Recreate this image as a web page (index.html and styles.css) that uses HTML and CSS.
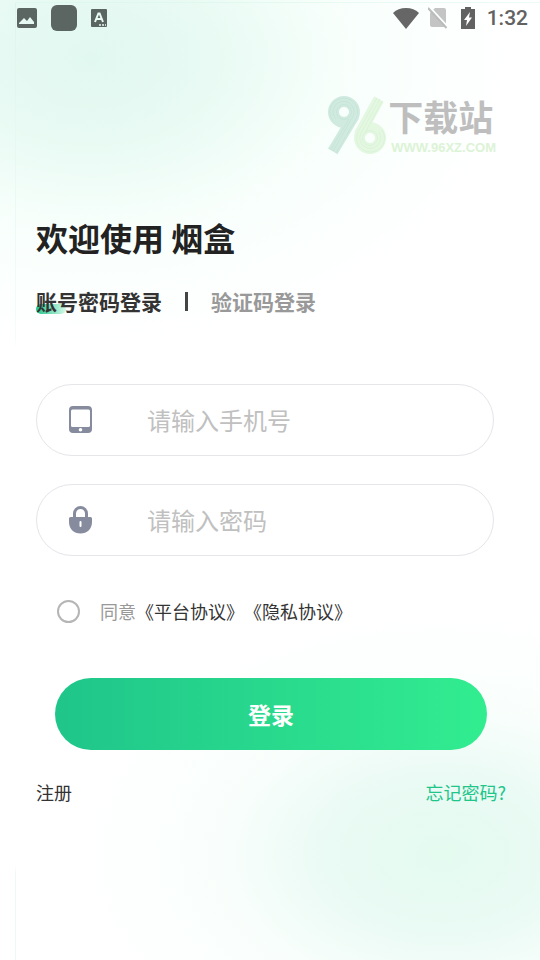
FILE: index.html
```html
<!DOCTYPE html>
<html lang="zh-CN">
<head>
<meta charset="utf-8">
<meta name="viewport" content="width=device-width, initial-scale=1">
<title>登录</title>
<link rel="stylesheet" href="styles.css">
</head>
<body>
<div class="page">
  <header class="status">
    <div class="status-group status-left">
      <svg width="20" height="20" viewBox="0 0 20 20" aria-hidden="true"><path fill="#5b6561" fill-rule="evenodd" d="M2 0h16a2 2 0 0 1 2 2v16a2 2 0 0 1-2 2H2a2 2 0 0 1-2-2V2a2 2 0 0 1 2-2zM2 16h15v-2l-4-5-3 4-3-3-5 5z"/></svg>
      <span class="app-dot"></span>
      <svg width="16" height="18" viewBox="0 0 16 18" aria-hidden="true"><rect width="16" height="18" rx="1" fill="#5b6561"/><path d="M4 13 7.400 4.500h1.200L12 13M5.300 10h5.400" fill="none" stroke="#eafbf4" stroke-width="2"/><path d="M8 16h2M11 16h2M14 16h1" stroke="#eafbf4" stroke-width="1.500"/></svg>
    </div>
    <div class="status-group status-right">
      <svg width="26" height="21" viewBox="0 0 26 21" aria-hidden="true"><path fill="#666" d="M13 21 0 5Q5 0 13 0t13 5z"/></svg>
      <svg class="sim" width="20" height="22" viewBox="0 0 20 22" aria-hidden="true"><path fill="#c4c4c4" d="M7 1h9a2 2 0 0 1 2 2v15a2 2 0 0 1-2 2H4a2 2 0 0 1-2-2V6z"/><path d="M1.500 0 20 20" stroke="#fbfffd" stroke-width="2"/><path d="M0 1 18.500 21" stroke="#bbb" stroke-width="2"/></svg>
      <svg class="battery" width="14" height="22" viewBox="0 0 14 22" aria-hidden="true"><path fill="#626262" d="M4 0h6v2h4v20H0V2h4z"/><path fill="#fff" d="M9 5 3 13h3l-1 6 6-8.500H8z"/></svg>
      <time class="clock">1:32</time>
    </div>
  </header>

  <div class="brand">
    <svg class="brand-mark" width="60" height="60" viewBox="0 0 60 60" aria-hidden="true">
      <g fill="none" stroke="#d0eae0">
        <circle cx="16" cy="17" r="10.500" stroke-width="11"/>
        <path stroke-width="11" d="M26 21 5 56"/>
      </g>
      <g fill="none" stroke="#c0e0d4" stroke-width=".6">
        <path d="M5 26A14 14 0 1 1 28 24L8 58M8 24A10.500 10.500 0 1 1 24 23L5 56M3 54 21 24M0 53l10 6"/>
        <circle cx="16" cy="17" r="7.500"/>
      </g>
      <g fill="none" stroke="#e3f7e1">
        <circle cx="42" cy="43" r="10.500" stroke-width="11"/>
        <path stroke-width="11" d="M31 40 51 4"/>
      </g>
      <g fill="none" stroke="#d5f0d2" stroke-width=".6">
        <path d="M54 35A14 14 0 1 1 30 37L49 3M51 37A10.500 10.500 0 1 1 33 38L52 4M37 38 54 6"/>
        <circle cx="42" cy="43" r="7.500"/>
      </g>
    </svg>
    <div class="brand-text">
      <span class="brand-name">下载站</span>
      <span class="brand-url">WWW.96XZ.COM</span>
    </div>
  </div>

  <main class="content">
    <h1 class="title">欢迎使用 烟盒</h1>
    <div class="tabs">
      <button type="button" class="tab tab-active"><span>账号密码登录</span></button>
      <span class="divider"></span>
      <button type="button" class="tab">验证码登录</button>
    </div>

    <form class="form">
      <label class="field">
        <svg width="24" height="28" viewBox="0 0 24 28" aria-hidden="true"><path fill="#868c9e" fill-rule="evenodd" d="M4 0h15a4 4 0 0 1 4 4v19a4 4 0 0 1-4 4H4a4 4 0 0 1-4-4V4a4 4 0 0 1 4-4zM3.500 3.500A1.500 1.500 0 0 0 2 5v14.500A1.500 1.500 0 0 0 3.500 21h16a1.500 1.500 0 0 0 1.500-1.500V5a1.500 1.500 0 0 0-1.500-1.500zM11.500 22a1.800 1.800 0 1 0 0 3.600 1.800 1.800 0 0 0 0-3.600z"/></svg>
        <input type="tel" placeholder="请输入手机号" aria-label="手机号">
      </label>
      <label class="field">
        <svg width="24" height="28" viewBox="0 0 24 28" aria-hidden="true"><path d="M5.500 13V7.500a6 6 0 0 1 12 0V13" fill="none" stroke="#868c9e" stroke-width="3"/><path fill="#868c9e" d="M1.500 11h20a1.500 1.500 0 0 1 1.500 1.500V16c0 7-5 11.500-11.500 11.500S0 23 0 16v-3.500A1.500 1.500 0 0 1 1.500 11z"/><path d="M11.500 16v4" stroke="#fff" stroke-width="2" stroke-linecap="round"/></svg>
        <input type="password" placeholder="请输入密码" aria-label="密码">
      </label>
      <div class="agree">
        <input type="checkbox" id="agree">
        <div class="agree-text"><label for="agree">同意</label><a href="#terms">《平台协议》</a><a href="#privacy">《隐私协议》</a></div>
      </div>
      <button type="submit" class="submit">登录</button>
    </form>

    <nav class="links">
      <a href="#register">注册</a>
      <a href="#forgot" class="forgot">忘记密码?</a>
    </nav>
  </main>
</div>
</body>
</html>
```
FILE: styles.css
```css
* {
  box-sizing: border-box;
}

body {
  margin: 0;
  font-family: "Noto Sans CJK SC", sans-serif;
  color: #333;
}

button,
input {
  font: inherit;
}

a {
  color: inherit;
  text-decoration: none;
}

.page {
  position: relative;
  min-height: 100vh;
  background:
    radial-gradient(ellipse 380px 250px at 82% 89%, #e4fbf0 0%, #eafaf4 30%, rgba(246, 254, 250, 0.7) 58%, rgba(255, 255, 255, 0) 100%),
    radial-gradient(ellipse 430px 290px at 17% 6%, #e1f8f0 0%, #e8faf3 28%, rgba(245, 255, 250, 0.75) 58%, rgba(255, 255, 255, 0) 100%),
    #fff;
}

/* Faint edge of the background sheet */
.page::before {
  content: "";
  position: absolute;
  inset: 2px 0 0 15px;
  border-top: 1px solid rgba(215, 245, 232, 0.5);
  background: linear-gradient(#def5eb, #f4fcf9 35%, transparent 36%, transparent 90%, #edf9f4 91%) left / 1px 100% no-repeat;
  pointer-events: none;
}

.status {
  display: flex;
  justify-content: space-between;
  align-items: center;
  height: 36px;
  padding: 0 12px 0 17px;
}

.status-group {
  display: flex;
  align-items: center;
}

.status-left {
  gap: 14px;
}

.app-dot {
  width: 26px;
  height: 26px;
  border-radius: 6px;
  background: #5b6561;
}

.sim {
  margin-left: 9px;
}

.battery {
  margin: 0 12px 0 13px;
}

.clock {
  font: 500 21px/36px Roboto, sans-serif;
  color: #626262;
}

.brand {
  display: flex;
  justify-content: flex-end;
  padding: 59px 44px 0 0;
}

.brand-text {
  display: flex;
  flex-direction: column;
}

.brand-name {
  font-size: 35px;
  font-weight: 700;
  line-height: 42px;
  color: #bebebe;
}

.brand-url {
  padding: 3px 0 0 3px;
  font: 700 13px/15px "Liberation Sans", sans-serif;
  color: #dcf3d6;
}

.content {
  padding: 59px 34px 24px 36px;
}

.title {
  margin: 0;
  font-size: 32px;
  font-weight: 700;
  line-height: 46px;
  color: #222;
}

.tabs {
  display: flex;
  align-items: center;
  margin-top: 25px;
}

.tab {
  padding: 0;
  border: 0;
  background: none;
  font-size: 21px;
  font-weight: 700;
  line-height: 32px;
  color: #999;
}

.tab-active {
  position: relative;
  color: #333;
}

.tab-active::before {
  content: "";
  position: absolute;
  left: 0;
  bottom: 3px;
  width: 30px;
  height: 10px;
  border-radius: 6px;
  background: linear-gradient(90deg, #20c58a, #d5f9e8);
}

.tab-active span {
  position: relative;
}

.divider {
  width: 3px;
  height: 19px;
  margin: 0 23px;
  background: #444;
}

.form {
  margin-top: 67px;
}

.field {
  display: flex;
  align-items: center;
  gap: 54px;
  height: 72px;
  margin: 0 12px 28px 0;
  padding: 0 32px;
  border: 1px solid #e5e5ea;
  border-radius: 36px;
  background: #fff;
}

.field svg {
  flex: none;
}

.field input {
  flex: 1;
  min-width: 0;
  padding: 0;
  border: 0;
  outline: 0;
  background: none;
  font-size: 24px;
  line-height: 36px;
  color: #333;
}

.field input::placeholder {
  color: #c0c0c0;
  opacity: 1;
}

.agree {
  display: flex;
  align-items: center;
  gap: 20px;
  margin: 41px 0 0 21px;
  font-size: 18px;
  line-height: 28px;
  text-spacing-trim: space-all;
  font-kerning: none;
}

.agree input {
  appearance: none;
  width: 23px;
  height: 23px;
  margin: 0;
  border: 2px solid #b5b5b5;
  border-radius: 50%;
}

.agree label {
  color: #999;
}

.submit {
  display: block;
  width: calc(100% - 38px);
  height: 72px;
  margin: 53px auto 0 19px;
  padding: 0;
  border: 0;
  border-radius: 36px;
  background: linear-gradient(90deg, #1fc58a, #32ed90);
  font-size: 23px;
  font-weight: 700;
  color: #fff;
}

.links {
  display: flex;
  justify-content: space-between;
  margin-top: 28px;
  font-size: 18px;
  line-height: 28px;
}

.forgot {
  color: #20c58a;
}
```
